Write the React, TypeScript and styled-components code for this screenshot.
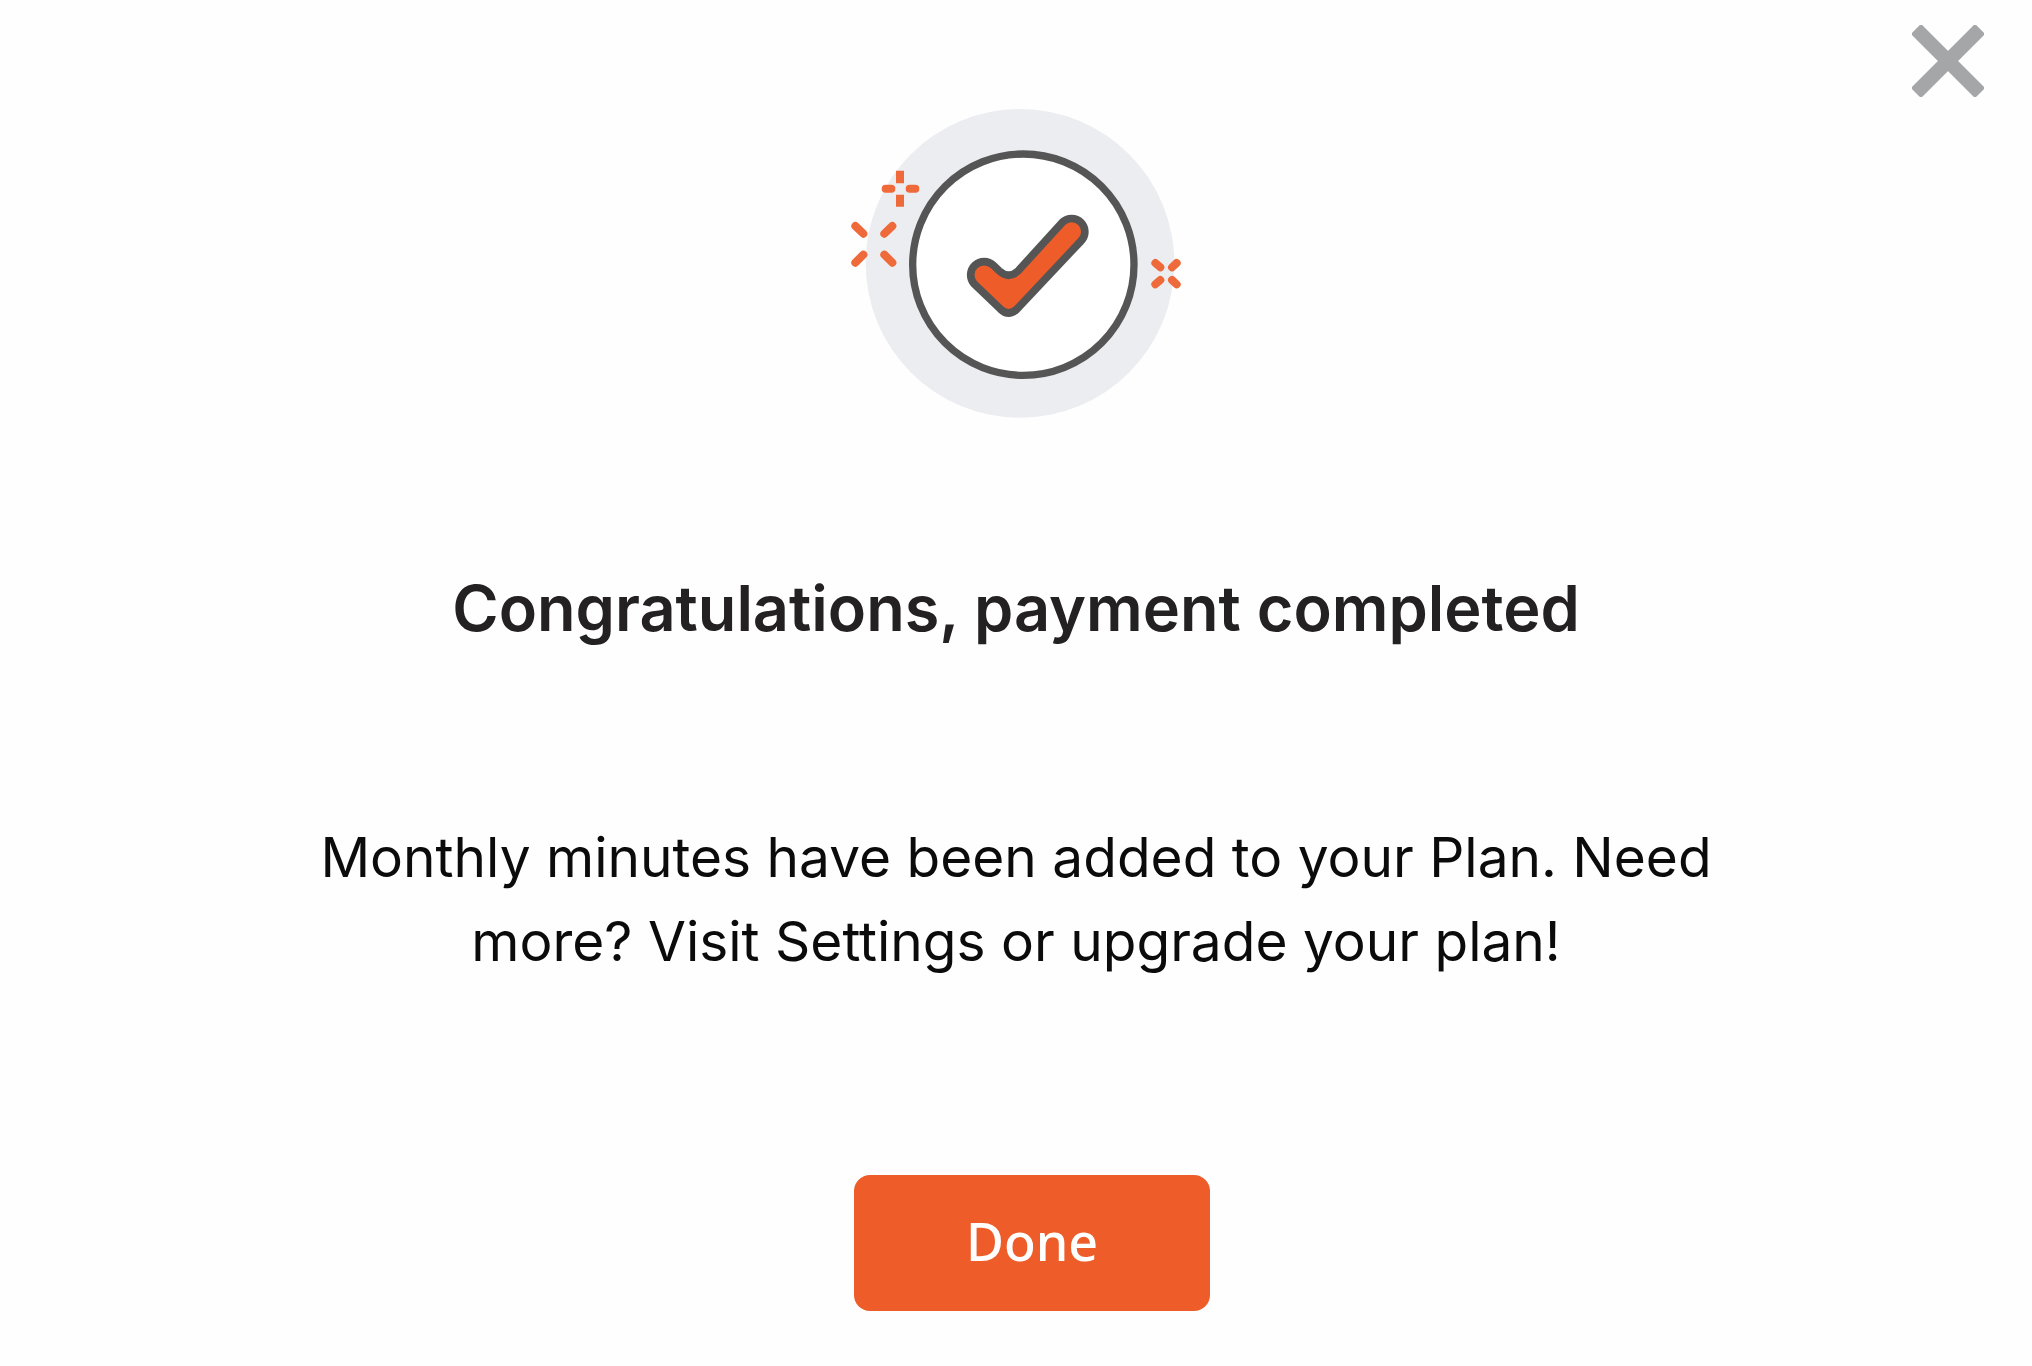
import React from "react";
import styled, { createGlobalStyle } from "styled-components";

const GlobalStyle = createGlobalStyle`
  * {
    box-sizing: border-box;
  }

  body {
    margin: 0;
    background: #fefefe;
    font-family: Inter, "Liberation Sans", sans-serif;
  }
`;

const Dialog = styled.main`
  display: flex;
  flex-direction: column;
  align-items: center;
  min-height: 100vh;
`;

const Header = styled.header`
  display: flex;
  justify-content: flex-end;
  align-self: stretch;
  padding: 25px 48px 0;
`;

const CloseButton = styled.button`
  width: 72px;
  height: 72px;
  padding: 0;
  border: 0;
  background: none;
  cursor: pointer;
`;

const CloseIcon = styled.svg`
  display: block;
  width: 100%;
  height: 100%;
`;

const Illustration = styled.svg`
  display: block;
  width: 340px;
  height: 314px;
  margin-top: 9px;
`;

const Title = styled.h1`
  margin: 150px 0 0;
  color: #232122;
  font-size: 63px;
  font-weight: 600;
  line-height: 76px;
  text-align: center;
`;

const Message = styled.p`
  max-width: 1440px;
  margin: 169px 0 0;
  color: #0b0b0b;
  font-size: 55px;
  line-height: 84px;
  text-align: center;
`;

const Actions = styled.footer`
  display: flex;
  padding: 192px 0 48px 32px;
`;

const PrimaryButton = styled.button`
  min-width: 356px;
  height: 136px;
  padding: 0 48px 4px;
  border: 0;
  border-radius: 16px;
  background: #ee5d29;
  color: #fff;
  font-family: "Noto Sans", "Open Sans", sans-serif;
  font-size: 52px;
  font-weight: 500;
  line-height: 72px;
  cursor: pointer;
`;

function SuccessIllustration() {
  return (
    <Illustration viewBox="18 48 1020 942" aria-hidden="true">
      <circle cx="540" cy="520" r="463" fill="#ebedf1" />
      <circle cx="550" cy="524" r="332" fill="#fff" stroke="#555" strokeWidth="22" />
      <path
        d="M460 526 L478 543 Q506 568 534 543 L667 397 A39 39 0 0 1 723 453 L530 658 Q506 680 482 658 L402 581 A40 40 0 0 1 460 526 Z"
        fill="#ee5d29"
        stroke="#555"
        strokeWidth="23"
        strokeLinejoin="round"
      />
      <g stroke="#ef6a3a" strokeWidth="24" fill="none">
        <path d="M180 242V280M180 314V350" />
        <path
          strokeLinecap="round"
          d="M137 296H154M209 296H226M46 408L70 431M157 408L133 431M46 518L70 494M157 518L133 494M946 519L961 532M1010 519L996 532M946 583L961 570M1010 583L996 570"
        />
      </g>
    </Illustration>
  );
}

export default function App() {
  return (
    <>
      <GlobalStyle />
      <Dialog>
        <Header>
          <CloseButton type="button" aria-label="Close">
            <CloseIcon viewBox="0 0 72 72" aria-hidden="true">
              <path
                d="M9 3L36 30L63 3L69 9L42 36L69 63L63 69L36 42L9 69L3 63L30 36L3 9Z"
                fill="#a5a6a8"
                stroke="#a5a6a8"
                strokeWidth="6"
                strokeLinejoin="round"
              />
            </CloseIcon>
          </CloseButton>
        </Header>
        <SuccessIllustration />
        <Title>Congratulations, payment completed</Title>
        <Message>
          Monthly minutes have been added to your Plan. Need more? Visit Settings or upgrade your plan!
        </Message>
        <Actions>
          <PrimaryButton type="button">Done</PrimaryButton>
        </Actions>
      </Dialog>
    </>
  );
}
